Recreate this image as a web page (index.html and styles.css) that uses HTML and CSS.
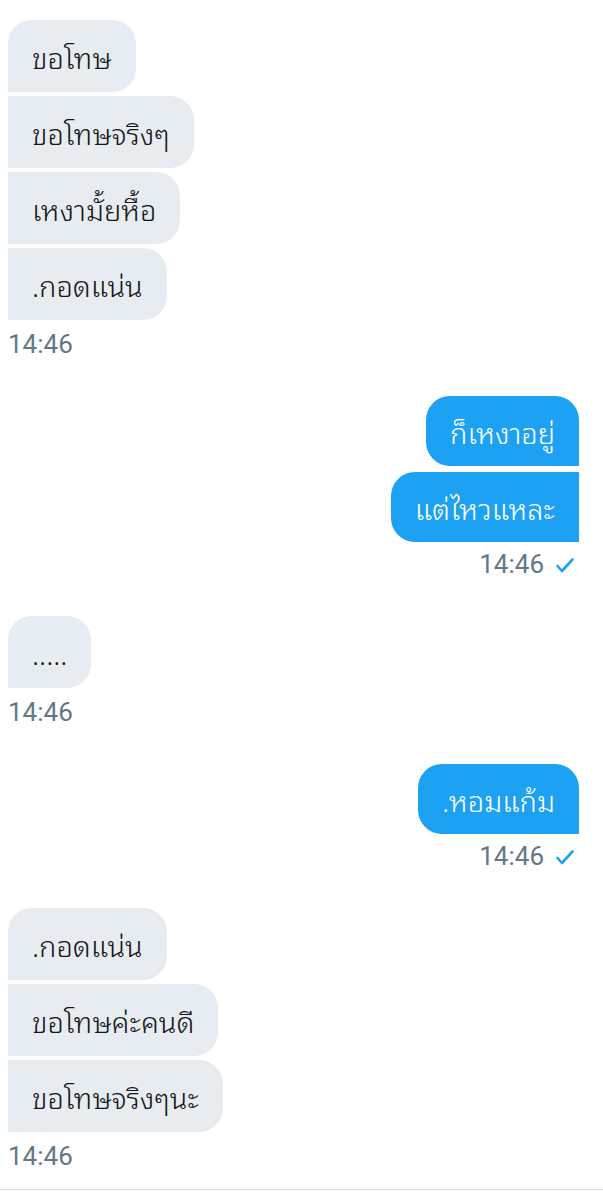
FILE: index.html
```html
<!DOCTYPE html>
<html lang="th">
<head>
<meta charset="utf-8">
<title>Chat</title>
<link rel="stylesheet" href="styles.css">
</head>
<body>
<div class="chat">
  <div class="group received">
    <div class="bubble first">ขอโทษ</div>
    <div class="bubble">ขอโทษจริงๆ</div>
    <div class="bubble">เหงามั้ยหื้อ</div>
    <div class="bubble">.กอดแน่น</div>
    <div class="time">14:46</div>
  </div>
  <div class="group sent">
    <div class="bubble first">ก็เหงาอยู่</div>
    <div class="bubble">แต่ไหวแหละ</div>
    <div class="time">14:46 <svg class="check" width="18" height="15" viewBox="0 0 18 15"><polyline points="1.5,8 6,13 16.5,1.5" fill="none" stroke="#1DA1F2" stroke-width="2.6" stroke-linecap="round" stroke-linejoin="round"/></svg></div>
  </div>
  <div class="group received">
    <div class="bubble first">.....</div>
    <div class="time">14:46</div>
  </div>
  <div class="group sent">
    <div class="bubble first">.หอมแก้ม</div>
    <div class="time">14:46 <svg class="check" width="18" height="15" viewBox="0 0 18 15"><polyline points="1.5,8 6,13 16.5,1.5" fill="none" stroke="#1DA1F2" stroke-width="2.6" stroke-linecap="round" stroke-linejoin="round"/></svg></div>
  </div>
  <div class="group received">
    <div class="bubble first">.กอดแน่น</div>
    <div class="bubble">ขอโทษค่ะคนดี</div>
    <div class="bubble">ขอโทษจริงๆนะ</div>
    <div class="time">14:46</div>
  </div>
  <div class="divider"></div>
</div>
</body>
</html>
```

FILE: styles.css
```css
html, body {
  margin: 0;
  padding: 0;
  background: #ffffff;
}

.chat {
  padding: 20px 24px 0 8px;
  display: flex;
  flex-direction: column;
  font-family: "Noto Sans Thai Looped", "Noto Looped Thai", "Noto Looped Thai UI", "Loma", "Garuda", "Norasi", "Noto Serif Thai", "Noto Sans", "Noto Sans Thai", sans-serif;
}

.group {
  display: flex;
  flex-direction: column;
  margin-top: 37px;
}

.group:first-child {
  margin-top: 0;
}

.received {
  align-items: flex-start;
  gap: 4px;
}

.sent {
  align-items: flex-end;
  gap: 6px;
}

.bubble {
  font-size: 29px;
  font-weight: 300;
  padding: 0 24px;
  white-space: nowrap;
}

.received .bubble {
  background: #E6ECF0;
  color: #14171A;
  line-height: 72px;
  height: 72px;
  border-radius: 0 24px 24px 0;
}

.received .bubble.first {
  border-top-left-radius: 24px;
}

.sent .bubble {
  background: #1DA1F2;
  color: #ffffff;
  line-height: 70px;
  height: 70px;
  border-radius: 24px 0 0 24px;
}

.sent .bubble.first {
  border-top-right-radius: 24px;
}

.time {
  font-family: Roboto, "Liberation Sans", sans-serif;
  font-size: 26px;
  line-height: 30px;
  color: #657786;
  display: flex;
  align-items: center;
}

.received .time {
  margin-top: 5px;
}

.sent .time {
  margin-top: 1px;
  padding-right: 5px;
  gap: 12px;
}

.check {
  display: block;
  margin-top: 2px;
}

.divider {
  margin: 18px -24px 0 -8px;
  height: 1px;
  background: #D5DCE1;
}
```
